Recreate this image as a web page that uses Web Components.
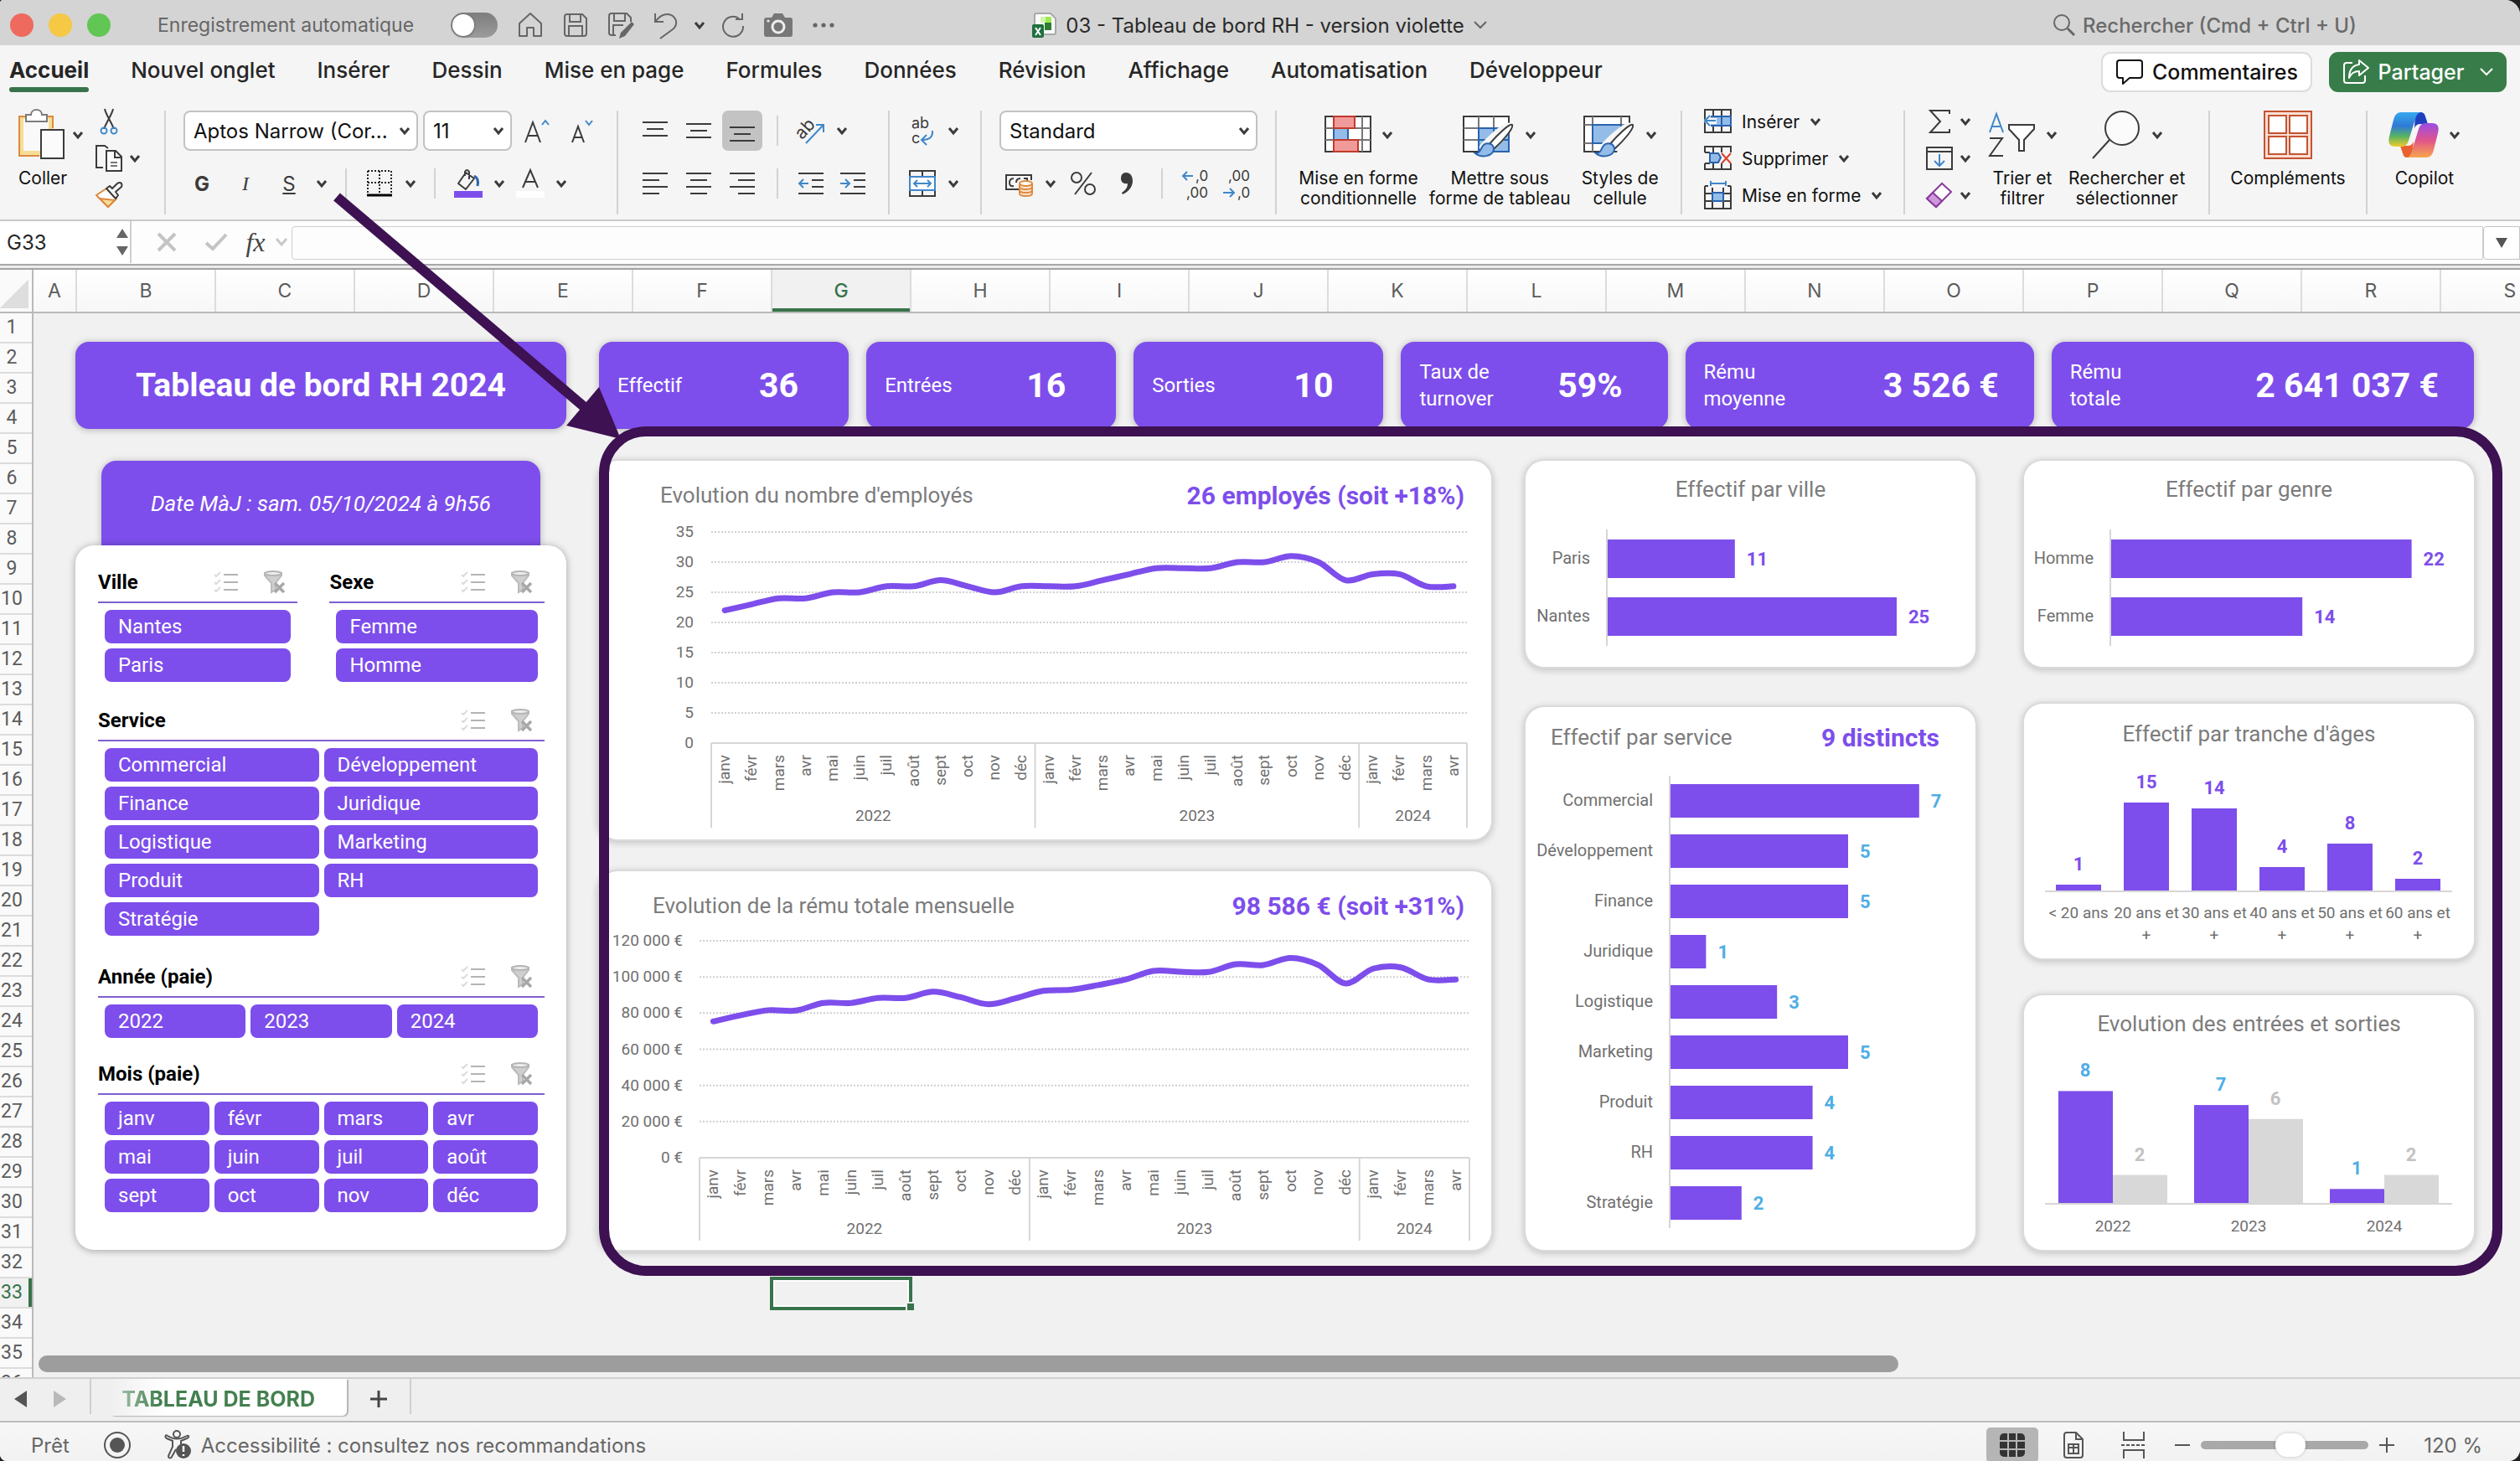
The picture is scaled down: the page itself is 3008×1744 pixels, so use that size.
<!DOCTYPE html>
<html lang="fr">
<head>
<meta charset="utf-8">
<title>03 - Tableau de bord RH - version violette</title>
<style>
html,body{margin:0;height:100%;background:#222}
body{font-family:Inter,"Liberation Sans",sans-serif;color:#262626;overflow:hidden;
  --purple:#7d4eeb;--dark-purple:#3d1152;--green:#38734b;--sheet:Roboto,"Liberation Sans",sans-serif}
</style>
</head>
<body>
<excel-window>
  <title-bar></title-bar>
  <ribbon-tabs></ribbon-tabs>
  <excel-ribbon></excel-ribbon>
  <formula-bar></formula-bar>
  <sheet-grid>
    <hr-dashboard></hr-dashboard>
  </sheet-grid>
  <sheet-tabs></sheet-tabs>
  <status-bar></status-bar>
  <annotation-overlay></annotation-overlay>
</excel-window>

<script>
const svg=(w,h,inner,extra='')=>`<svg aria-hidden="true" width="${w}" height="${h}" viewBox="0 0 ${w} ${h}" fill="none" stroke="#3b3b3b" stroke-width="2" ${extra}>${inner}</svg>`;
const lines=(w,rows)=>svg(w,26,rows.map(([x,l,y])=>`<path d="M${x} ${y}h${l}"/>`).join(''));
const brush=`<path d="M54 17C49 17 28 36 24 42L31 47C37 42 58 21 54 17Z" fill="#fff" stroke="#f5f5f5" stroke-width="7"/><path d="M59 16C56 14 41 28 31 40L37 45C48 35 61 20 59 16Z" fill="#fff" stroke="#3b3b3b"/><path d="M15 50C21 50 21 45 24 41C28 36 37 38 37 45C36 54 22 56 15 50Z" fill="#93bce8" stroke="#2a63ae"/>`;
const ICON={
  chev:svg(14,10,'<path d="M2 2L7 8L12 2" stroke-width="3"/>'),
  thin:svg(18,12,'<path d="M2 2L9 9L16 2" stroke="#666"/>'),
  home:svg(32,32,'<path d="M3 14L16 2L29 14V29H20V19H12V29H3Z" stroke="#666" stroke-linejoin="round"/>'),
  save:svg(30,30,'<path d="M2 5Q2 2 5 2H23L28 7V25Q28 28 25 28H5Q2 28 2 25ZM8 2V11H21V2M7 28V16H23V28" stroke="#666"/>'),
  saveas:svg(32,32,'<path d="M10 28H5Q2 28 2 25V5Q2 2 5 2H23L28 7V12M8 2V11H21V2M7 28V16H19" stroke="#666"/><path d="M29 12L32 15L21 29L14 32L16 25Z" fill="#666" stroke="none"/>'),
  undo:svg(30,32,'<path d="M2 2V12H12M3 11C9 3 17 1 23 5C29 10 28 17 23 21L8 32" stroke="#666"/>'),
  redo:svg(30,30,'<path d="M22 7A12 12 0 1 0 27 16M26 1V8H18" stroke="#666"/>'),
  camera:svg(36,30,'<path d="M4 6H10L13 1H23L26 6H32Q35 6 35 9V26Q35 29 32 29H4Q1 29 1 26V9Q1 6 4 6Z" fill="#777" stroke="none"/><circle cx="18" cy="17" r="7" stroke="#eee" stroke-width="3"/><circle cx="6" cy="10" r="1.6" fill="#eee" stroke="none"/>'),
  dots:svg(28,8,'<g fill="#666" stroke="none"><circle cx="4" cy="4" r="2.6"/><circle cx="14" cy="4" r="2.6"/><circle cx="24" cy="4" r="2.6"/></g>'),
  xlfile:svg(30,30,'<path d="M5 1H22L28 7V24Q28 26 26 26H5Q3 26 3 24V3Q3 1 5 1Z" fill="#fafafa" stroke="#a9a9a9"/><path d="M10 5H16V12H10Z" fill="#d4f5b0" stroke="none"/><path d="M16 5H23V12H16Z" fill="#9bea52" stroke="none"/><path d="M15 12H23V21H15Z" fill="#2e7d32" stroke="none"/><rect x="0" y="14" width="14" height="16" rx="2" fill="#1f6f3d" stroke="none"/><path d="M4 18L10 27M10 18L4 27" stroke="#fff"/>'),
  search:svg(28,28,'<circle cx="11" cy="11" r="9" stroke="#666"/><path d="M18 18L26 26" stroke="#666" stroke-width="3"/>'),
  comment:svg(34,32,'<path d="M5 2H29Q32 2 32 5V20Q32 23 29 23H17L9 30V23H5Q2 23 2 20V5Q2 2 5 2Z" stroke="#111" stroke-linejoin="round"/>'),
  share:svg(34,32,'<path d="M13 5H6Q3 5 3 8V26Q3 29 6 29H25Q28 29 28 26V20M21 2L32 11L21 20V15C14 15 11 18 9 23C9 13 14 8 21 7Z" stroke="#fff" stroke-linejoin="round"/>'),
  chevw:svg(18,12,'<path d="M2 2L9 9L16 2" stroke="#fff"/>'),
  paste:svg(56,62,'<path d="M1 9H41V24H28V56H1Z" fill="#f6dd96" stroke="none"/><path d="M6 12H36V24H28V50H6Z" fill="#f9f9f9" stroke="none"/><path d="M41 23V9H1V56H25" stroke="#dc8a3e"/><path d="M9 15V7H15C15 -1 28 -1 28 7H34V15Z" fill="#fff" stroke="#7b7b7b"/><rect x="27" y="25" width="27" height="34" fill="#fbfbfb"/>'),
  cut:svg(22,34,'<path d="M6 2C7 8 13 16 17 26M16 2C15 8 9 16 5 26"/><circle cx="5" cy="28" r="3.5" stroke="#3f87c9"/><circle cx="17" cy="28" r="3.5" stroke="#3f87c9"/>'),
  copy:svg(34,34,'<path d="M10 28H2V2H12L16 5" fill="none"/><path d="M14 8H25L32 15V32H14Z" fill="#fbfbfb"/><path d="M24 8V16H32" /><path d="M19 22H27M19 26H27" stroke="#777"/>'),
  painter:svg(34,32,'<path d="M2 16L14 8L26 20L16 30Z" fill="#fff" stroke="#dc8a3e"/><path d="M6 20L24 22L16 30Z" fill="#f6dd96" stroke="#dc8a3e"/><path d="M14 8L18 5L21 8L27 2Q30 0 32 2Q33 4 32 6L25 12L28 16L25 20Z" fill="#f5f5f5" stroke-linejoin="round"/>'),
  grow:svg(32,30,'<path d="M2 29L11 5L20 29M5 21H17"/><path d="M22 8L26 3L30 8" stroke="#3f87c9"/>'),
  shrink:svg(28,30,'<path d="M2 29L9 10L16 29M4 23H14"/><path d="M18 3L22 8L26 3" stroke="#3f87c9"/>'),
  border:svg(30,32,'<path d="M1 1H29M1 1V28M29 1V28M15 1V28M1 15H29" stroke-dasharray="2 2" stroke="#222"/><path d="M0 30H30" stroke="#000" stroke-width="3"/>'),
  fill:svg(34,34,'<path d="M14 4L5 17L14 24L24 11ZM13 8V3Q15 -1 18 3V12" stroke-linejoin="round"/><path d="M24 8Q30 11 28 20" stroke="#2a63ae" stroke-width="3"/><rect x="0" y="26" width="34" height="8" fill="#7d4eeb" stroke="none"/>'),
  color:svg(34,34,'<path d="M8 22L17 1L26 22M11 15H23" /><rect x="0" y="26" width="34" height="8" fill="#fff" stroke="none"/>'),
  top:lines(30,[[0,30,3],[5,20,11],[0,30,19]]),
  mid:lines(30,[[0,30,5],[5,20,13],[0,30,21]]),
  bot:lines(30,[[0,30,9],[5,20,17],[0,30,25]]),
  left:lines(30,[[0,30,1],[0,20,9],[0,30,17],[0,20,25]]),
  center:lines(30,[[0,30,1],[5,20,9],[0,30,17],[5,20,25]]),
  right:lines(30,[[0,30,1],[10,20,9],[0,30,17],[10,20,25]]),
  orient:`<svg aria-hidden="true" width="36" height="34" viewBox="0 0 36 34" fill="none"><text x="2" y="24" font-size="21" fill="#3b3b3b" transform="rotate(-48 10 20)">ab</text><path d="M12 32L32 11M24 10H33V19" stroke="#3f87c9" stroke-width="2"/></svg>`,
  outdent:svg(30,28,'<path d="M0 2H30M16 10H30M16 18H30M0 26H30"/><path d="M12 14H1M6 9L1 14L6 19" stroke="#3f87c9"/>'),
  indent:svg(30,28,'<path d="M0 2H30M16 10H30M16 18H30M0 26H30"/><path d="M0 14H11M6 9L11 14L6 19" stroke="#3f87c9"/>'),
  wrap:`<svg aria-hidden="true" width="30" height="38" viewBox="0 0 30 38" fill="none"><g font-size="18" fill="#3b3b3b"><text x="2" y="16">ab</text><text x="2" y="34">c</text></g><path d="M27 19Q28 30 15 30M20 24L14 30L20 36" stroke="#3f87c9" stroke-width="2"/></svg>`,
  merge:svg(32,32,'<path d="M1 8V1H31V8M1 24V31H31V24M16 1V8M16 24V31"/><rect x="1" y="8" width="30" height="16" fill="#fff" stroke="#3f87c9"/><path d="M6 16H26M10 12L6 16L10 20M22 12L26 16L22 20" stroke="#3f87c9"/>'),
  money:svg(34,32,'<path d="M17 23H1V6H31V12"/><path d="M10 10Q5 10 5 15T10 19M18 10Q13 10 13 15M22 10H26V13"/><path d="M17 16V28Q17 31 24.5 31T32 28V16" fill="#fde3cd" stroke="#dc8a3e"/><ellipse cx="24.5" cy="16" rx="7.5" ry="3" fill="#fff" stroke="#dc8a3e"/><path d="M17 20Q17 23 24.5 23T32 20M17 24Q17 27 24.5 27T32 24" stroke="#dc8a3e"/>'),
  pct:svg(32,32,'<circle cx="8" cy="9" r="6"/><circle cx="24" cy="23" r="6"/><path d="M26 3L6 29"/>'),
  comma:svg(16,28,'<path d="M7 1C12 1 15 5 15 11C15 18 10 24 3 27L2 25C7 22 9 18 9 14C4 15 1 12 1 8C1 4 3 1 7 1Z" fill="#3b3b3b" stroke="none"/>'),
  dec1:`<svg aria-hidden="true" width="36" height="40" viewBox="0 0 36 40" fill="none"><g font-size="17" fill="#3b3b3b"><text x="18" y="17">,0</text><text x="7" y="37">,00</text></g><path d="M15 11H3M8 6L3 11L8 16" stroke="#3f87c9" stroke-width="2"/></svg>`,
  dec2:`<svg aria-hidden="true" width="36" height="40" viewBox="0 0 36 40" fill="none"><g font-size="17" fill="#3b3b3b"><text x="7" y="17">,00</text><text x="18" y="37">,0</text></g><path d="M1 31H14M9 26L14 31L9 36" stroke="#3f87c9" stroke-width="2"/></svg>`,
  cond:svg(56,56,'<rect x="1" y="6" width="54" height="42" fill="#fff"/><path d="M1 20H55M1 34H55M11 6V48M45 6V48" stroke="#777"/><rect x="11" y="20" width="17" height="14" fill="#93bce8" stroke="#2a63ae"/><rect x="11" y="6" width="25" height="14" fill="#f19a9a" stroke="#c33a2b"/><rect x="11" y="34" width="29" height="14" fill="#f19a9a" stroke="#c33a2b"/>'),
  table:svg(62,56,'<path d="M1 6H55V48H1Z" fill="#fff"/><path d="M1 20H55M1 34H19M19 6V48M37 6V20" stroke="#777"/><path d="M19 20H55V48H19Z" fill="#93bce8" stroke="#2a63ae"/><path d="M37 20V48M19 34H55" stroke="#2a63ae"/>'+brush),
  styles:svg(62,56,'<path d="M1 6H55V48H1Z" fill="#fff"/><path d="M1 16H55M1 38H55M11 6V48M45 6V48" stroke="#777"/><rect x="11" y="16" width="34" height="22" fill="#93bce8" stroke="#2a63ae"/><path d="M46 20H58V50H40Z" fill="#f5f5f5" stroke="none"/>'+brush),
  ins:svg(34,30,'<path d="M2 1H33V28H2ZM12 1V28M22 1V28"/><path d="M8 9H33V20H8Z" fill="#93bce8" stroke="#2a63ae"/><path d="M22 9V20" stroke="#2a63ae"/><path d="M0 14L9 6V11H16V18H9V23Z" fill="#f5f5f5" stroke="none"/><path d="M15 14H2M8 8L2 14L8 20" stroke="#3f87c9"/>'),
  del:svg(34,30,'<path d="M2 8V1H33V8M2 21V28H33V21M12 1V8M22 1V8M12 21V28M22 21V28M2 8H8M2 21H8"/><path d="M8 9H18L21 14L18 20H8Z" fill="#93bce8" stroke="#2a63ae"/><path d="M22 9L33 21M33 9L22 21" stroke="#d9402f"/>'),
  fmt:svg(34,34,'<path d="M2 6H6M29 6H33M2 6V33H33V6M2 15H33M2 24H33M11 8V33M24 8V33"/><rect x="11" y="14" width="13" height="10" fill="#93bce8" stroke="#2a63ae"/><path d="M9 3H27M9 0V6M27 0V6" stroke="#3f87c9"/>'),
  sum:svg(28,30,'<path d="M26 6V2H3L15 15L3 28H26V24"/>'),
  down:svg(34,30,'<rect x="2" y="2" width="30" height="26"/><path d="M2 7H32"/><path d="M17 10V24M11 18L17 24L23 18" stroke="#3f87c9"/>'),
  erase:svg(34,32,'<path d="M2 20L20 2L31 12L13 30Z" fill="#fff" stroke="#8a3c9c"/><path d="M2 20L9 13L20 23L13 30Z" fill="#cf96dd" stroke="#8a3c9c"/>'),
  sort:svg(58,58,'<path d="M3 26L11 4L19 26M6 19H16" stroke="#3f87c9"/><path d="M3 33H18L3 54H19"/><path d="M26 17H56V22L44 35V48H38V35L26 22Z" fill="#fff" />'),
  find:svg(60,60,'<circle cx="37" cy="22" r="20" fill="#fbfbfb"/><path d="M22 36L2 58"/>'),
  addins:svg(60,60,'<g stroke="#c4532f" fill="#fff"><rect x="2" y="2" width="56" height="56" fill="#f9ded4"/><rect x="7" y="7" width="21" height="21"/><rect x="32" y="7" width="21" height="21"/><rect x="7" y="32" width="21" height="21"/><rect x="32" y="32" width="21" height="21"/></g>'),
  copilot:`<svg aria-hidden="true" width="60" height="54" viewBox="0 0 60 54"><defs><linearGradient id="ca" x1="0" y1="0" x2="0" y2="1"><stop offset="0" stop-color="#35a9ee"/><stop offset=".4" stop-color="#2f79d6"/><stop offset=".7" stop-color="#58b360"/><stop offset="1" stop-color="#f3cb2d"/></linearGradient><linearGradient id="cb" x1="0" y1="0" x2="0" y2="1"><stop offset="0" stop-color="#9a4ce6"/><stop offset=".5" stop-color="#e0548b"/><stop offset="1" stop-color="#f7a64b"/></linearGradient></defs><path d="M32 0H38Q43 0 44 5L47 14H38Q33 14 31 19Z" fill="#1d3fc0"/><path d="M28 54H22Q18 54 17 49L14 40H23Q28 40 30 35Z" fill="#e9612f"/><path d="M15 0H38Q34 1 32 8L24 34Q22 41 16 41H8Q-2 41 1 29L6 9Q8 0 15 0Z" fill="url(#ca)"/><path d="M45 54H22Q26 53 28 46L36 20Q38 13 44 13H52Q62 13 59 25L54 45Q52 54 45 54Z" fill="url(#cb)"/></svg>`,
  list:svg(30,26,'<g stroke="#dcdcdc"><path d="M1 4L3 6L8 1M1 13L3 15L8 10M1 22L3 24L8 19"/></g><path d="M12 4H29M12 13H29M12 22H29" stroke="#b4b4b4"/>'),
  funnel:svg(28,28,'<path d="M2 3V6L10 15V26L15 23V15L22 6V3Z" fill="#cfcfcf" stroke="#bbb"/><ellipse cx="12" cy="3.5" rx="10" ry="2.5" fill="#eee" stroke="#b5b5b5"/><path d="M14 15L25 26M25 15L14 26" stroke="#a8a8a8" stroke-width="3.5"/>'),
  cancel:svg(24,24,'<path d="M2 2L22 22M22 2L2 22" stroke="#c4c4c4" stroke-width="4"/>'),
  ok:svg(28,22,'<path d="M2 12L10 19L26 2" stroke="#c4c4c4" stroke-width="4"/>'),
  chevg:svg(16,12,'<path d="M2 2L8 9L14 2" stroke="#c8c8c8" stroke-width="3"/>'),
  spin:svg(16,36,'<path d="M8 2L15 13H1ZM8 34L15 23H1Z" fill="#666" stroke="none"/>'),
  tri:svg(16,14,'<path d="M1 1H15L8 13Z" fill="#555" stroke="none"/>'),
  prev:svg(16,22,'<path d="M15 1V21L0 11Z" fill="#555" stroke="none"/>'),
  next:svg(16,22,'<path d="M1 1V21L16 11Z" fill="#b9b9b9" stroke="none"/>'),
  plus:svg(22,22,'<path d="M11 1V21M1 11H21" stroke="#444" stroke-width="3"/>'),
  rec:svg(34,34,'<circle cx="17" cy="17" r="15" stroke="#555"/><circle cx="17" cy="17" r="9" fill="#555" stroke="none"/>'),
  access:svg(34,36,'<circle cx="14" cy="5" r="4" stroke="#555"/><path d="M3 7C1 5 -1 8 2 10L9 13V20L4 31C4 34 7 34 8 32L13 23M26 7C29 6 29 9 26 10L19 13V18" stroke="#555"/><path d="M3 7Q14 14 26 7" stroke="#555"/><circle cx="22" cy="25" r="9" fill="#555" stroke="none"/><path d="M22 19V26M22 29V31" stroke="#fff" stroke-width="2.5"/>'),
  vgrid:svg(30,30,'<rect x="0" y="1" width="30" height="28" rx="5" fill="#333" stroke="none"/><path d="M10 1V29M20 1V29M0 10H30M0 20H30" stroke="#b5b5b5"/>'),
  vpage:svg(26,34,'<path d="M5 2H16L24 10V29Q24 32 21 32H5Q2 32 2 29V5Q2 2 5 2ZM16 2V10H24" stroke="#555"/><path d="M7 16H19V27H7ZM7 20H19M13 16V27" stroke="#555"/>'),
  vbreak:svg(30,34,'<path d="M3 1V11H27V1M3 33V23H27V33" stroke="#555"/><path d="M0 17H30" stroke="#555" stroke-dasharray="4 2"/>'),
  minus:svg(20,20,'<path d="M1 10H19" stroke="#555"/>'),
  plus2:svg(20,20,'<path d="M10 1V19M1 10H19" stroke="#555"/>')
};
const BASE=`:host,*{box-sizing:border-box}svg{display:block;flex:none;overflow:visible}button,select,input{font:inherit;color:inherit;border:0;background:none;padding:0;margin:0;appearance:none}button{display:flex;align-items:center;justify-content:center}`;
function define(name,css,html){
  customElements.define(name,class extends HTMLElement{
    connectedCallback(){
      if(this.shadowRoot)return;
      const t=document.createElement('template');
      t.innerHTML=`<style>${BASE}${css}</style>`+(typeof html==='function'?html(this):html);
      this.attachShadow({mode:'open'}).append(t.content.cloneNode(true));
    }
  });
}

/* ---------- window shell ---------- */
define('excel-window',`:host{display:flex;flex-direction:column;position:relative;height:100vh;overflow:hidden;background:#f1f1f1;border-radius:4px 18px 14px 8px}
::slotted(*){flex:none}::slotted(sheet-grid){flex:1;min-height:0}`,'<slot></slot>');

define('title-bar',`:host{display:grid;grid-template-columns:1fr auto 1fr;align-items:center;height:54px;background:#d4d4d4;padding:6px 12px 0;font-size:24px}
.l,.c,.r{display:flex;align-items:center}
.lights{display:flex;gap:18px;margin-right:56px}.lights i{width:28px;height:28px;border-radius:50%}
.auto{display:flex;align-items:center;gap:44px;font-size:23px;color:#666;margin-right:12px;white-space:nowrap}
.sw{width:56px;height:30px;border-radius:15px;background:linear-gradient(#7d7d7d,#9c9c9c);padding:2px}
.sw::before{content:"";display:block;width:26px;height:26px;border-radius:50%;background:#fff;box-shadow:0 1px 3px #0006}
button{width:54px;height:40px}button.s{width:26px}
.c{gap:10px;color:#2a2a2a}.r{justify-content:flex-end;padding-right:178px}
.r label{display:flex;align-items:center;gap:8px;color:#6a6a6a;font-weight:500}
.r input{width:332px;height:40px}.r input::placeholder{color:#6a6a6a;opacity:1}`,
`<div class="l"><div class="lights"><i style="background:#ee6a5f"></i><i style="background:#f5c945"></i><i style="background:#62c655"></i></div>
<label class="auto">Enregistrement automatique<input class="sw" type="checkbox" role="switch"></label>
<button aria-label="Accueil">${ICON.home}</button><button aria-label="Enregistrer">${ICON.save}</button><button aria-label="Enregistrer sous">${ICON.saveas}</button><button aria-label="Annuler">${ICON.undo}</button><button class="s" aria-label="Historique">${ICON.chev}</button><button aria-label="Rétablir">${ICON.redo}</button><button aria-label="Capture">${ICON.camera}</button><button aria-label="Plus">${ICON.dots}</button></div>
<div class="c">${ICON.xlfile}<span>03 - Tableau de bord RH - version violette</span>${ICON.thin}</div>
<div class="r"><label>${ICON.search}<input type="text" aria-label="Rechercher" placeholder="Rechercher (Cmd + Ctrl + U)"></label></div>`);

define('ribbon-tabs',`:host{display:flex;justify-content:space-between;height:66px;background:#f5f5f5;padding:0 16px 0 11px;font-size:26px;font-weight:500}
nav{display:flex;gap:50px}
nav button{height:56px;padding-top:8px;border-bottom:6px solid transparent;white-space:nowrap}
nav button.on{font-weight:700;position:relative}
nav button.on::after{content:"";position:absolute;left:0;right:0;bottom:-6px;height:6px;border-radius:3px;background:var(--green)}
.r{display:flex;gap:20px;padding-top:8px;font-size:25px}
.r button{height:48px;border-radius:11px;gap:10px}
.co{width:252px;background:#fff;border:2px solid #dcdcdc;color:#111}.pa{width:212px;background:#387d49;color:#fff}.pa svg:last-child{margin-left:8px}`,
`<nav>${['Accueil','Nouvel onglet','Insérer','Dessin','Mise en page','Formules','Données','Révision','Affichage','Automatisation','Développeur'].map((t,i)=>`<button class="${i?'':'on'}">${t}</button>`).join('')}</nav>
<div class="r"><button class="co">${ICON.comment}Commentaires</button><button class="pa">${ICON.share}Partager${ICON.chevw}</button></div>`);

/* ---------- ribbon ---------- */
const big=(ic,l,chev=true,c='')=>`<button class="big ${c}"><span class="ic">${ICON[ic]}${chev?ICON.chev:''}</span><span class="lb">${l}</span></button>`;
const b=(ic,c='b48',l=ic)=>`<button class="${c}" aria-label="${l}">${ICON[ic]}</button>`;
const cv='<button class="cv" aria-label="Options">'+ICON.chev+'</button>';
const combo=(w,l,v)=>`<span class="combo" style="width:${w}px"><select aria-label="${l}"><option>${v}</option></select>${ICON.chev}</span>`;
define('excel-ribbon',`:host{display:grid;grid-template-columns:197fr 540fr 324fr 110fr 352fr 484fr 266fr 364fr 188fr 183fr;height:144px;background:#f5f5f5;border-bottom:2px solid #c9c9c9;font-size:21px;color:#111}
.g{display:flex;position:relative;padding-top:12px}
.g+.g::before{content:"";position:absolute;left:-1px;top:12px;height:124px;width:2px;background:#d2d2d2}
.rows{display:flex;flex-direction:column;gap:15px}.row{display:flex;align-items:center;height:48px}
.three{display:flex;flex-direction:column;margin-top:-9px}.three .row{height:44px}
.b48{width:48px;height:48px}.b52{width:52px;height:48px}.b36{width:36px;height:44px}.cv{width:26px;height:40px}
.on{position:relative}.on::before{content:"";position:absolute;inset:0 2px;background:#c3c3c3;border-radius:7px}.on svg{position:relative}
.sp{width:2px;height:36px;background:#d2d2d2;margin:0 15px}
.combo{display:grid;align-items:center;height:48px;font-size:24px}
.combo>*{grid-area:1/1}.combo select{height:48px;width:100%;border:2px solid #c2c2c2;border-radius:8px;background:#fff;padding:0 30px 0 10px}.combo svg{justify-self:end;margin-right:9px;pointer-events:none}
.f{padding-left:4px;gap:6px}
.big{flex-direction:column;justify-content:flex-start;height:125px}.big.start{align-items:flex-start}
.ic{display:flex;align-items:center;gap:12px;height:58px;margin-bottom:11px}.start .ic{gap:8px}
.lb{line-height:24px;text-align:center;white-space:nowrap}
.t{font-size:24px;color:#3b3b3b}.lbl{gap:12px;white-space:nowrap}`,
`<div class="g" style="padding-left:22px">${big('paste','Coller',true,'start')}<div class="three" style="margin-left:12px"><div class="row">${b('cut','b36','Couper')}</div><div class="row">${b('copy','b36','Copier')}${cv}</div><div class="row">${b('painter','b36','Reproduire la mise en forme')}</div></div></div>
<div class="g" style="padding-left:18px"><div class="rows"><div class="row f">${combo(280,'Police','Aptos Narrow (Cor...')}${combo(106,'Taille','11')}${b('grow','b48','Agrandir')}${b('shrink','b48','Réduire')}</div>
<div class="row"><button class="b52 t"><b>G</b></button><button class="b52 t"><i style="font-family:'Liberation Serif',serif">I</i></button><button class="b52 t"><u>S</u></button>${cv}<span class="sp"></span>${b('border')}${cv}<span class="sp"></span>${b('fill')}${cv}${b('color')}${cv}</div></div></div>
<div class="g" style="padding-left:19px"><div class="rows"><div class="row">${b('top','b52')}${b('mid','b52')}${b('bot','b52 on')}<span class="sp"></span>${b('orient')}${cv}</div><div class="row">${b('left','b52')}${b('center','b52')}${b('right','b52')}<span class="sp"></span>${b('outdent')}${b('indent','b52')}</div></div></div>
<div class="g" style="padding-left:16px"><div class="rows"><div class="row">${b('wrap')}${cv}</div><div class="row">${b('merge')}${cv}</div></div></div>
<div class="g" style="padding-left:22px"><div class="rows"><div class="row">${combo(308,'Format','Standard')}</div><div class="row">${b('money')}${cv}${b('pct','b52')}${b('comma','b52')}<span class="sp"></span>${b('dec1')}${b('dec2','b52')}</div></div></div>
<div class="g" style="justify-content:center;gap:13px">${big('cond','Mise en forme<br>conditionnelle')}${big('table','Mettre sous<br>forme de tableau')}${big('styles','Styles de<br>cellule')}</div>
<div class="g" style="padding-left:26px"><div class="three">${[['ins','Insérer'],['del','Supprimer'],['fmt','Mise en forme']].map(([i,l])=>`<button class="row lbl" style="justify-content:flex-start">${ICON[i]}<span>${l}</span>${ICON.chev}</button>`).join('')}</div></div>
<div class="g" style="padding-left:24px;gap:13px"><div class="three"><div class="row">${b('sum','b36')}${cv}</div><div class="row">${b('down','b36')}${cv}</div><div class="row">${b('erase','b36')}${cv}</div></div>${big('sort','Trier et<br>filtrer')}${big('find','Rechercher et<br>sélectionner')}</div>
<div class="g" style="justify-content:center">${big('addins','Compléments',false)}</div>
<div class="g" style="padding-left:26px">${big('copilot','Copilot')}</div>`);

define('formula-bar',`:host{display:flex;align-items:stretch;height:58px;border-bottom:2px solid #a3a3a3;padding-bottom:4px;font-size:24px;background:linear-gradient(#fdfdfd 51px,#a8a8a8 51px,#a8a8a8 53px,#ececec 53px)}
.n{display:flex;align-items:center;width:157px;border-right:2px solid #cfcfcf;background:#fff;height:50px}.n input{width:138px;padding-left:8px}
button{height:50px}.x{width:62px;margin-left:11px}.o{width:56px}.fx{width:38px;font:italic 32px "Liberation Serif",serif;color:#444}.v{width:24px}
.in{flex:1;height:40px;margin-top:6px;border:1px solid #cfcfcf;border-radius:4px 0 0 4px;background:#fdfdfd}
.d{width:44px;height:40px;margin-top:6px;border:1px solid #c4c4c4;border-radius:4px 0 0 4px;background:#fff}`,
`<div class="n"><input aria-label="Zone Nom" value="G33">${ICON.spin}</div><button class="x" aria-label="Annuler">${ICON.cancel}</button><button class="o" aria-label="Valider">${ICON.ok}</button><button class="fx">fx</button><button class="v" aria-label="Fonctions">${ICON.chevg}</button><input class="in" aria-label="Formule"><button class="d" aria-label="Développer">${ICON.tri}</button>`);

/* ---------- sheet ---------- */
define('sheet-grid',`:host{display:grid;grid-template:52px 1fr/40px 1fr;position:relative;overflow:hidden;background:#f1f1f1}
.corner{background:linear-gradient(135deg,#fff0 50%,#dedede 50%) 0 10px/34px 36px no-repeat #fafafa;border-right:2px solid #b9b9b9;border-bottom:2px solid #b9b9b9}
.cols{display:flex;overflow:hidden;background:linear-gradient(#fff,#f7f7f7);border-bottom:2px solid #b9b9b9;font-size:23px;color:#5c5c5c}
.cols span{flex:none;width:166px;border-right:2px solid #dcdcdc;display:flex;align-items:center;justify-content:center}
.cols span:first-child{width:52px}.cols .on{background:#f1f1f1;color:var(--green);box-shadow:inset 0 -4px var(--green);font-weight:500}
.rows{overflow:hidden;font:23px/34px var(--sheet);color:#5c5c5c;background:#fafafa;border-right:2px solid #b9b9b9}
.rows span{display:block;height:36px;padding-right:10px;text-align:center;border-bottom:2px solid #dcdcdc;white-space:nowrap}
.rows .on{background:#f1f1f1;color:var(--green);box-shadow:inset -4px 0 var(--green)}
main{position:relative;overflow:hidden}
.sel{position:absolute;left:879px;top:1150px;width:170px;height:40px;border:4px solid var(--green);box-shadow:inset 0 0 0 2px #fff}
.sel::after{content:"";position:absolute;right:-8px;bottom:-6px;width:8px;height:8px;background:var(--green);border:2px solid #f1f1f1;box-sizing:content-box}
.bar{position:absolute;left:6px;right:25%;bottom:6px;height:20px;border-radius:10px;background:#9d9d9d}`,
`<div class="corner"></div><div class="cols">${[...'ABCDEFGHIJKLMNOPQRS'].map(c=>`<span class="${c==='G'?'on':''}">${c}</span>`).join('')}</div>
<div class="rows">${Array.from({length:36},(_,i)=>`<span class="${i===32?'on':''}">${i+1}</span>`).join('')}</div>
<main><slot></slot><div class="sel"></div><div class="bar"></div></main>`);

define('kpi-card',`:host{display:flex;align-items:center;justify-content:space-between;height:104px;border-radius:16px;background:var(--purple);color:#fff;padding:0 var(--pr,60px) 0 22px;box-shadow:0 1px 8px #0004}
span{font-size:24px;line-height:32px}b{font-size:41px;white-space:nowrap}`,
'<span><slot></slot></span><b><slot name="value"></slot></b>');

define('pivot-slicer',`:host{display:block;font-size:24px}
header{display:flex;align-items:center;height:48px;border-bottom:2px solid #7f5fd0;color:#000;padding-right:13px}
h3{flex:1;margin:0;font-size:24px}header button+button{margin-left:29px}
.it{display:grid;grid-template-columns:repeat(var(--n),1fr);gap:6px;padding:8px 8px 0}
.it button{height:40px;border-radius:8px;background:var(--purple);color:#fff;justify-content:flex-start;padding-left:16px}`,
h=>`<header><h3>${h.getAttribute('label')}</h3><button aria-label="Sélection multiple">${ICON.list}</button><button aria-label="Effacer le filtre">${ICON.funnel}</button></header><div class="it" style="--n:${h.getAttribute('cols')||1}">${h.getAttribute('items').split(',').map(t=>`<button>${t}</button>`).join('')}</div>`);

define('chart-card',`:host{display:block;background:#fff;border-radius:22px;box-shadow:0 0 0 2px #dadada,0 2px 9px 2px #0003;font-size:26px;color:#7c7c7c}
header{display:flex;align-items:center;justify-content:space-between;height:var(--hh,72px);padding:var(--hp,0)}
:host([centered]) header{justify-content:center}
h2{margin:0;font:400 26px var(--sheet);white-space:nowrap}b{font-size:30px;color:var(--purple);white-space:nowrap}`,
h=>`<header><h2>${h.getAttribute('label')}</h2><b><slot name="figure"></slot></b></header><slot></slot>`);

const MONTHS=['janv','févr','mars','avr','mai','juin','juil','août','sept','oct','nov','déc'];
const CH=`:host{display:block;font-family:var(--sheet)}svg.c{display:block;width:100%;height:auto}text{font-size:19px;fill:#707070}.cat{font-size:20px}.v{font-weight:700;font-size:22px;fill:var(--purple)}.bl{fill:#4faee5}.gr{fill:#c2c2c2}.end{text-anchor:end}.mid{text-anchor:middle}.ax{stroke:#d6d6d6;stroke-width:2}.gl{stroke:#d0d0d0;stroke-width:2;stroke-dasharray:2 2}.bar{fill:var(--purple)}`;
/* coordinates inside every plot are sheet coordinates, so the viewBox is the plot's area of the sheet */
define('line-chart',CH,h=>{
  const [x0,x1,yt,yb,bottom,lab,vy,vh]=h.getAttribute('plot').split(',').map(Number);
  const max=+h.getAttribute('max'),step=+h.getAttribute('step'),eur=h.hasAttribute('euro');
  const v=h.getAttribute('values').split(',').map(Number),w=(x1-x0)/28;
  const P=v.map((n,i)=>[x0+w*(i+.5),yb-(yb-yt)*n/max]);
  let d=`M${P[0]}`;
  for(let i=0;i<P.length-1;i++){const a=P[i-1]||P[i],p=P[i],q=P[i+1],z=P[i+2]||q;
    d+=`C${p[0]+(q[0]-a[0])/6} ${p[1]+(q[1]-a[1])/6} ${q[0]-(z[0]-p[0])/6} ${q[1]-(z[1]-p[1])/6} ${q[0]} ${q[1]}`}
  let s='';
  for(let n=0;n<=max;n+=step){const y=yb-(yb-yt)*n/max,t=eur?(n*1000).toLocaleString('fr-FR').replace(/\s/g,' ')+' €':n;
    s+=`<path class="${n?'gl':'ax'}" d="M${x0} ${y}H${x1}"/><text class="end" x="${lab}" y="${y+6}">${t}</text>`}
  [0,12,24,28].forEach(k=>s+=`<path class="ax" d="M${x0+w*k} ${yb}V${bottom}"/>`);
  [['2022',6],['2023',18],['2024',26]].forEach(([t,k])=>s+=`<text class="mid" x="${x0+w*k}" y="${bottom-8}">${t}</text>`);
  P.forEach((p,i)=>s+=`<text class="end" transform="translate(${p[0]+6} ${yb+14}) rotate(-90)">${MONTHS[i%12]}</text>`);
  return `<svg class="c" viewBox="715 ${vy} 1065 ${vh}" role="img">${s}<path d="${d}" fill="none" stroke="#7d4eeb" stroke-width="7" stroke-linecap="round"/></svg>`});

define('bar-chart',CH,h=>{
  const [ax,y0,y1,first,pitch,bh,unit]=h.getAttribute('plot').split(',').map(Number);
  const lab=ax-20,cl=h.getAttribute('tone')||'';
  let s=`<path class="ax" d="M${ax} ${y0}V${y1}"/>`;
  h.getAttribute('data').split(',').forEach((e,i)=>{const [n,v]=e.split(':'),y=first+pitch*i,w=v*unit;
    s+=`<rect class="bar" x="${ax+1}" y="${y}" width="${w}" height="${bh}"/><text class="end cat" x="${lab}" y="${y+bh/2+6}">${n}</text><text class="v ${cl}" x="${ax+w+15}" y="${y+bh/2+8}">${v}</text>`});
  return `<svg class="c" viewBox="${h.getAttribute('view')}" role="img">${s}</svg>`});

define('age-chart',CH,h=>{
  let s='';[['&lt; 20 ans',1],['20 ans et',15],['30 ans et',14],['40 ans et',4],['50 ans et',8],['60 ans et',2]].forEach(([t,v],i)=>{
    const x=2454+81*i,y=1063-v*7;
    s+=`<rect class="bar" x="${x}" y="${y}" width="54" height="${v*7}"/><text class="v mid" x="${x+27}" y="${y-17}">${v}</text><text class="mid" x="${x+27}" y="1096">${t}</text>${i?`<text class="mid" x="${x+27}" y="1123">+</text>`:''}`});
  return `<svg class="c" viewBox="2416 912 537 232" role="img">${s}<path class="ax" d="M2441 1064H2927"/></svg>`});

define('flow-chart',CH,h=>{
  let s='';[['2022',8,2],['2023',7,6],['2024',1,2]].forEach(([t,a,c],i)=>{
    const x=2457+162*i,k=16.7;
    s+=`<rect class="bar" x="${x}" y="${1436-a*k}" width="65" height="${a*k}"/><rect x="${x+65}" y="${1436-c*k}" width="65" height="${c*k}" fill="#d8d8d8"/><text class="v bl mid" x="${x+32}" y="${1436-a*k-17}">${a}</text><text class="v gr mid" x="${x+97}" y="${1436-c*k-17}">${c}</text><text class="mid" x="${x+65}" y="1470">${t}</text>`});
  return `<svg class="c" viewBox="2416 1256 537 236" role="img">${s}<path class="ax" d="M2441 1437H2927"/></svg>`});

define('hr-dashboard',`:host{display:grid;grid-template-columns:586fr 2238fr;column-gap:39px;padding:34px 55px 0 50px;font-family:var(--sheet)}
.side{display:flex;flex-direction:column}
h1{margin:0 0 38px;height:104px;display:flex;align-items:center;justify-content:center;border-radius:16px;background:var(--purple);color:#fff;font-size:39px;box-shadow:0 1px 8px #0004}
.date{margin:0 31px;height:101px;border-radius:18px 18px 0 0;background:var(--purple);color:#fff;font-style:italic;font-size:26px;display:flex;align-items:center;justify-content:center;box-shadow:0 1px 8px #0004}
.panel{position:relative;flex:1;background:#fff;border-radius:22px;padding:21px 26px 44px 27px;box-shadow:0 1px 10px #0005}
.two{display:grid;grid-template-columns:238fr 256fr;gap:38px}
.s{margin-top:23px}.y{margin-top:26px}.m{margin-top:20px}
.kpis{display:grid;grid-template-columns:298fr 298fr 298fr 318fr 416fr 504fr;gap:21px;margin-bottom:38px}
.charts{display:grid;grid-template-columns:1065fr 41px 537fr 58px 537fr}
.charts div{display:flex;flex-direction:column;justify-content:space-between;height:942px}
.charts div:nth-child(2){grid-column:3}.charts div:nth-child(3){grid-column:5}`,
`<div class="side"><h1>Tableau de bord RH 2024</h1><div class="date">Date MàJ : sam. 05/10/2024 à 9h56</div>
<div class="panel"><div class="two"><pivot-slicer label="Ville" items="Nantes,Paris"></pivot-slicer><pivot-slicer label="Sexe" items="Femme,Homme"></pivot-slicer></div>
<pivot-slicer class="s" label="Service" cols="2" items="Commercial,Développement,Finance,Juridique,Logistique,Marketing,Produit,RH,Stratégie"></pivot-slicer>
<pivot-slicer class="y" label="Année (paie)" cols="3" items="2022,2023,2024"></pivot-slicer>
<pivot-slicer class="m" label="Mois (paie)" cols="4" items="${MONTHS}"></pivot-slicer></div></div>
<div><div class="kpis"><kpi-card>Effectif<span slot="value">36</span></kpi-card><kpi-card>Entrées<span slot="value">16</span></kpi-card><kpi-card>Sorties<span slot="value">10</span></kpi-card><kpi-card style="--pr:54px">Taux de<br>turnover<span slot="value">59%</span></kpi-card><kpi-card style="--pr:42px">Rému<br>moyenne<span slot="value">3 526 €</span></kpi-card><kpi-card style="--pr:42px">Rému<br>totale<span slot="value">2 641 037 €</span></kpi-card></div>
<div class="charts"><div>
<chart-card label="Evolution du nombre d'employés" style="--hh:82px;--hp:0 32px 0 73px"><span slot="figure">26 employés (soit +18%)</span><line-chart plot="849,1751,635,887,988,828,632,370" max="35" step="5" values="22,23,24,24,25,25,26,26,27,26,25,26,26,26,27,28,29,29,29,30,30,31,30,27,28,28,26,26"></line-chart></chart-card>
<chart-card label="Evolution de la rému totale mensuelle" style="--hh:82px;--hp:0 32px 0 64px"><span slot="figure">98 586 € (soit +31%)</span><line-chart euro plot="835,1754,1123,1382,1481,815,1122,370" max="120" step="20" values="75.4,78.8,81.6,81.4,85.6,85.6,88.4,88.4,91.8,88.8,84.9,88.2,92.3,92.9,95.5,98.6,103.3,102.9,102.7,107,106.6,110.5,106.6,96.4,104.6,105.3,98.6,98.6"></line-chart></chart-card>
</div><div>
<chart-card centered label="Effectif par ville" style="--hh:68px"><bar-chart view="1821 618 537 178" plot="1918,632,771,644,69,46,13.8" data="Paris:11,Nantes:25"></bar-chart></chart-card>
<chart-card label="Effectif par service" style="--hp:0 43px 0 30px"><span slot="figure">9 distincts</span><bar-chart tone="bl" view="1821 916 537 576" plot="1993,926,1466,936,60,40,42.4" data="Commercial:7,Développement:5,Finance:5,Juridique:1,Logistique:3,Marketing:5,Produit:4,RH:4,Stratégie:2"></bar-chart></chart-card>
</div><div>
<chart-card centered label="Effectif par genre" style="--hh:68px"><bar-chart view="2416 618 537 178" plot="2519,632,771,644,69,46,16.3" data="Homme:22,Femme:14"></bar-chart></chart-card>
<chart-card centered label="Effectif par tranche d'âges"><age-chart></age-chart></chart-card>
<chart-card centered label="Evolution des entrées et sorties" style="--hh:68px"><flow-chart></flow-chart></chart-card>
</div></div></div>`);

/* ---------- footer ---------- */
define('sheet-tabs',`:host{display:flex;align-items:stretch;height:52px;background:#efefef;border-top:2px solid #d0d0d0;font-size:25px}
.a{display:flex;align-items:center;gap:30px;width:109px;padding-left:17px;border-right:2px solid #cfcfcf;height:42px;align-self:flex-start;padding-top:6px}
.tab{width:284px;margin-left:21px;height:44px;background:linear-gradient(90deg,#efefef,#fff 70px);border-radius:0 0 6px 6px;box-shadow:2px 1px 1px #b5b5b5;font-weight:700;justify-content:flex-end;padding:4px 38px 0 0;white-space:nowrap}
.tab span{background:linear-gradient(90deg,#9dbda6,#43804f 44px);background-clip:text;color:transparent}
.p{width:77px;height:42px;padding-top:6px;border-right:2px solid #cfcfcf}`,
`<div class="a"><button aria-label="Feuille précédente">${ICON.prev}</button><button aria-label="Feuille suivante">${ICON.next}</button></div><button class="tab"><span>TABLEAU DE BORD</span></button><button class="p" aria-label="Nouvelle feuille">${ICON.plus}</button>`);

define('status-bar',`:host{display:flex;align-items:center;height:48px;padding:8px 45px 0 37px;background:linear-gradient(#f7f7f7,#f2f2f2);border-top:2px solid #bdbdbd;font-size:24px;color:#666}
.rec{margin:0 40px}.acc{gap:9px}
.r{margin-left:auto;display:flex;align-items:center}
.v{width:72px;height:38px}.on{width:62px;height:42px;border-radius:5px;background:#b5b5b5;margin-right:6px}
.z{width:44px}
input{width:200px;height:28px}input::-webkit-slider-runnable-track{height:10px;border-radius:5px;background:#a9a9a9}
input::-webkit-slider-thumb{-webkit-appearance:none;width:36px;height:28px;margin-top:-9px;border-radius:14px;background:#fff;box-shadow:0 0 4px #0003}
output{margin-left:22px}`,
`<span>Prêt</span><button class="rec" aria-label="Enregistrer une macro">${ICON.rec}</button><button class="acc">${ICON.access}<span>Accessibilité : consultez nos recommandations</span></button>
<div class="r"><button class="on" aria-label="Normal">${ICON.vgrid}</button><button class="v" aria-label="Mise en page">${ICON.vpage}</button><button class="v" aria-label="Sauts de page">${ICON.vbreak}</button><button class="z" aria-label="Zoom arrière">${ICON.minus}</button><input type="range" aria-label="Zoom" min="0" max="100" value="54"><button class="z" aria-label="Zoom avant">${ICON.plus2}</button><output>120 %</output></div>`);

define('annotation-overlay',`:host{position:absolute;left:0;top:0;width:100%;pointer-events:none}svg{width:100%;height:auto}`,
`<svg aria-hidden="true" viewBox="0 0 3008 1744" fill="none" stroke="#3d1152" stroke-width="12"><rect x="721" y="515" width="2260" height="1002" rx="50"/><path d="M402 235L700 488"/><path d="M741 524L676 508L715 462Z" fill="#3d1152" stroke="none"/></svg>`);
</script>
</body>
</html>
